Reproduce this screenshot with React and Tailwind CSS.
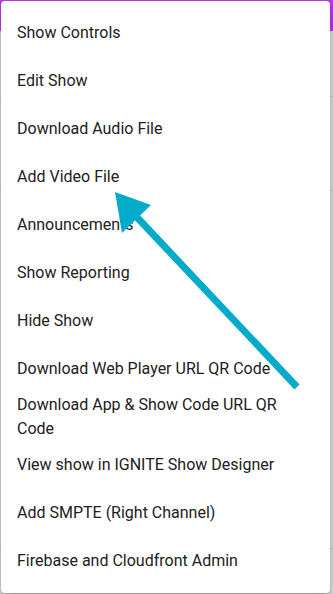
import React from "react";

const items = [
  "Show Controls",
  "Edit Show",
  "Download Audio File",
  "Add Video File",
  "Announcements",
  "Show Reporting",
  "Hide Show",
  "Download Web Player URL QR Code",
  "Download App & Show Code URL QR Code",
  "View show in IGNITE Show Designer",
  "Add SMPTE (Right Channel)",
  "Firebase and Cloudfront Admin",
];

export default function App() {
  return (
    <div className="relative w-[333px] h-[594px] overflow-hidden bg-[#e2e2e2]" style={{ fontFamily: "Roboto, 'Liberation Sans', sans-serif" }}>
      <div className="h-[31px] bg-[#bf3be4]" />
      <div className="h-[66px] border-b border-[#c9c9c9]" />
      <div className="h-[94px] border-b border-[#c9c9c9]" />
      <div className="h-[358px] border-b border-[#c9c9c9]" />

      <div className="absolute left-[1px] top-[1px] w-[329px] rounded-[4px] bg-white py-2 shadow-[0_5px_5px_-3px_rgba(0,0,0,0.2),0_8px_10px_1px_rgba(0,0,0,0.14),0_3px_14px_2px_rgba(0,0,0,0.12)]">
        {items.map((t) => (
          <div key={t} className="flex h-12 items-center px-4 text-[16px] leading-6 text-[#212121]">
            <span>{t}</span>
          </div>
        ))}
      </div>

      <svg className="absolute left-0 top-0" width="333" height="594" viewBox="0 0 333 594">
        <line x1="297" y1="387" x2="132" y2="212" stroke="#02abc9" strokeWidth="7" />
        <polygon points="115,192 151,205 122,233" fill="#02abc9" />
      </svg>
    </div>
  );
}
